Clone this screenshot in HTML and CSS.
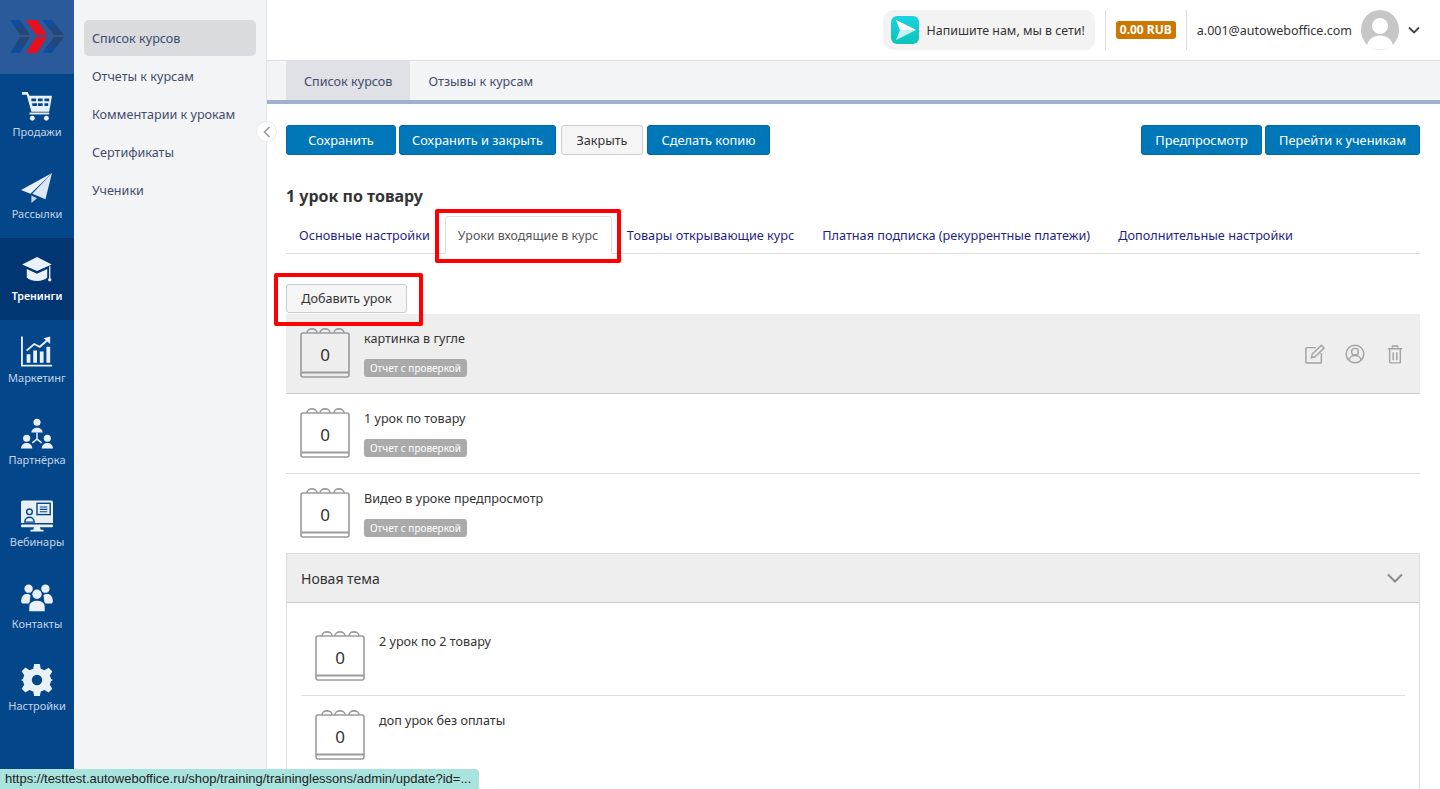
FILE: index.html
```html
<!DOCTYPE html>
<html lang="ru">
<head>
  <meta charset="UTF-8">
  <title>Список курсов</title>
  <link rel="stylesheet" href="styles.css">
</head>
<body>
  <div class="app">
    <!-- Левое меню -->
    <aside class="rail">
      <div class="logo">
        <svg width="54" height="34" viewBox="0 0 54 34">
          <defs>
            <linearGradient id="logo-top" x1="0" y1="0" x2="0" y2="1"><stop offset="0" stop-color="#0b4fa6"/><stop offset="1" stop-color="#2b4468"/></linearGradient>
            <linearGradient id="logo-bottom" x1="0" y1="0" x2="0" y2="1"><stop offset="0" stop-color="#2b4468"/><stop offset="1" stop-color="#0b4fa6"/></linearGradient>
          </defs>
          <polygon points="0,0 10,0 20,15 10,15" fill="url(#logo-top)"/>
          <polygon points="10,17 20,17 10,33 0,33" fill="url(#logo-bottom)"/>
          <polygon points="32,0 42,0 54,15 44,15" fill="url(#logo-top)"/>
          <polygon points="44,17 54,17 42,33 32,33" fill="url(#logo-bottom)"/>
          <polygon points="16,0 27,0 37,15 26,15" fill="#e8101e"/>
          <polygon points="26,17 37,17 27,33 16,33" fill="#e8101e"/>
        </svg>
      </div>
      <a class="rail-item">
        <span class="rail-icon"><svg width="32" height="30" viewBox="0 0 34 32"><path d="M1 1h6l2 4h24l-3 17H11L6 4H1z" fill="#e9f0f8"/><path d="M11 8h5v3h-5zM18 8h5v3h-5zM25 8h5v3h-5zM12 13h5v3h-5zM18 13h5v3h-5zM25 13h4v3h-4z" fill="#04468a"/><rect x="9" y="23" width="21" height="2" fill="#e9f0f8"/><circle cx="12" cy="29" r="2.6" fill="#e9f0f8"/><circle cx="27" cy="29" r="2.6" fill="#e9f0f8"/></svg></span>
        <span class="rail-label">Продажи</span>
      </a>
      <a class="rail-item">
        <span class="rail-icon"><svg width="32" height="30" viewBox="0 0 34 32"><path d="M33 0 L0 18 l10 4z" fill="#e9f0f8"/><path d="M33 0 L12 22 l14 6z" fill="#dce7f3"/><path d="M11 24v8l6-5z" fill="#c3d3e6"/></svg></span>
        <span class="rail-label">Рассылки</span>
      </a>
      <a class="rail-item active">
        <span class="rail-icon"><svg width="32" height="26" viewBox="0 0 34 28"><path d="M17 0 33 8 17 15 1 8z" fill="#e9f0f8"/><path d="M6 13v9c4 5 18 5 22 0v-9l-11 5z" fill="#e9f0f8"/><rect x="30" y="10" width="1.4" height="13" fill="#e9f0f8"/><circle cx="30.7" cy="24.5" r="1.8" fill="#e9f0f8"/></svg></span>
        <span class="rail-label">Тренинги</span>
      </a>
      <a class="rail-item">
        <span class="rail-icon"><svg width="32" height="32" viewBox="0 0 34 33"><path d="M1 0v31h32" fill="none" stroke="#e9f0f8" stroke-width="2"/><path d="M6 28V19h4v9zM13 28V15h4v13zM20 28V16h4v12zM27 28V11h4v17z" fill="#e9f0f8"/><path d="M6 15l8-7 6 3 8-7" fill="none" stroke="#e9f0f8" stroke-width="2"/><path d="M24 2l7-2v8z" fill="#e9f0f8"/></svg></span>
        <span class="rail-label">Маркетинг</span>
      </a>
      <a class="rail-item">
        <span class="rail-icon"><svg width="32" height="32" viewBox="0 0 34 33"><g fill="#e9f0f8"><circle cx="17" cy="4" r="3.8"/><path d="M11 15c0-7 12-7 12 0z"/><circle cx="6" cy="21" r="3.8"/><path d="M0 32c0-8 12-8 12 0z"/><circle cx="28" cy="21" r="3.8"/><path d="M22 32c0-8 12-8 12 0z"/></g><path d="M17 15v7l-5 4M17 22l5 4" fill="none" stroke="#e9f0f8" stroke-width="1.6"/></svg></span>
        <span class="rail-label">Партнёрка</span>
      </a>
      <a class="rail-item">
        <span class="rail-icon"><svg width="32" height="32" viewBox="0 0 34 33"><path d="M2 0h30a2 2 0 0 1 2 2v22H0V2a2 2 0 0 1 2-2z" fill="#e9f0f8"/><rect x="0" y="25.500" width="34" height="3" rx="1" fill="#e9f0f8"/><path d="M14 28h6l1 3h3v2H10v-2h3z" fill="#e9f0f8"/><rect x="17" y="3" width="14" height="12" fill="none" stroke="#04468a" stroke-width="1.500"/><path d="M20 7h8M20 9.500h8M20 12h8" stroke="#04468a" stroke-width="1.200"/><circle cx="9" cy="12" r="3" fill="none" stroke="#04468a" stroke-width="1.500"/><path d="M4 23c0-7 10-7 10 0z" fill="none" stroke="#04468a" stroke-width="1.500"/></svg></span>
        <span class="rail-label">Вебинары</span>
      </a>
      <a class="rail-item">
        <span class="rail-icon"><svg width="32" height="28" viewBox="0 0 34 30"><g fill="#e9f0f8"><circle cx="8" cy="5" r="4.500"/><path d="M0 19c0-10 8-9 10-7l-1 9H1z"/><circle cx="26" cy="5" r="4.500"/><path d="M34 19c0-10-8-9-10-7l1 9h8z"/><circle cx="17" cy="11" r="5"/></g><path d="M8 30v-6c0-9 18-9 18 0v6z" fill="#e9f0f8" stroke="#04468a" stroke-width="1.500"/></svg></span>
        <span class="rail-label">Контакты</span>
      </a>
      <a class="rail-item">
        <span class="rail-icon"><svg width="32" height="32" viewBox="0 0 34 34"><path d="M14 0h6l1 5 4 1.700 4.300-2.700 4 4-2.700 4.300L32 16l2 1v0l-2 1-1.400 4 2.700 4.300-4 4-4.300-2.700-4 1.700-1 5h-6l-1-5-4-1.700-4.300 2.700-4-4L3.400 22 2 18l-2-1 2-1 1.400-4-2.700-4.300 4-4L9 6.700l4-1.700z" fill="#e9f0f8"/><circle cx="17" cy="17" r="5.500" fill="#04468a"/></svg></span>
        <span class="rail-label">Настройки</span>
      </a>
    </aside>

    <!-- Подменю -->
    <nav class="submenu">
      <a class="submenu-item active">Список курсов</a>
      <a class="submenu-item">Отчеты к курсам</a>
      <a class="submenu-item">Комментарии к урокам</a>
      <a class="submenu-item">Сертификаты</a>
      <a class="submenu-item">Ученики</a>
      <span class="collapse">
        <svg width="8" height="12" viewBox="0 0 8 12"><path d="M6.500 1 1.500 6l5 5" fill="none" stroke="#9a9a9a" stroke-width="1.600"/></svg>
      </span>
    </nav>

    <div class="main">
      <!-- Шапка -->
      <header class="topbar">
        <div class="chat">
          <svg width="28" height="28" viewBox="0 0 28 28">
            <defs><linearGradient id="chat-bg" x1="0" y1="0" x2="0" y2="1"><stop offset="0" stop-color="#19d3e0"/><stop offset="1" stop-color="#0cc4b8"/></linearGradient></defs>
            <rect width="28" height="28" rx="6" fill="url(#chat-bg)"/><path d="M5 4l20 10L5 24l4-10z" fill="#c5f3f0"/><path d="M5 4l20 10H9z" fill="#fff"/>
          </svg>
          <span>Напишите нам, мы в сети!</span>
        </div>
        <div class="balance"><b>0.00 RUB</b></div>
        <div class="account">
          <span>a.001@autoweboffice.com</span>
          <span class="avatar">
            <svg width="38" height="40" viewBox="0 0 38 40"><ellipse cx="19" cy="20" rx="19" ry="20" fill="#c6c6c6"/><circle cx="19" cy="16" r="8" fill="#fff"/><path d="M6 36c2-14 24-14 26 0-6 5-20 5-26 0z" fill="#fff"/></svg>
          </span>
          <svg width="12" height="8" viewBox="0 0 12 8"><path d="M1 1.500 6 6.500l5-5" fill="none" stroke="#444" stroke-width="1.800"/></svg>
        </div>
      </header>

      <div class="section-tabs">
        <a class="section-tab active">Список курсов</a>
        <a class="section-tab">Отзывы к курсам</a>
      </div>

      <div class="content">
        <div class="toolbar">
          <button class="btn primary btn-save">Сохранить</button>
          <button class="btn primary btn-save-close">Сохранить и закрыть</button>
          <button class="btn btn-close">Закрыть</button>
          <button class="btn primary btn-copy">Сделать копию</button>
          <div class="toolbar-right">
            <button class="btn primary btn-preview">Предпросмотр</button>
            <button class="btn primary btn-students">Перейти к ученикам</button>
          </div>
        </div>

        <h1 class="title">1 урок по товару</h1>

        <ul class="tabs">
          <li class="tab">Основные настройки</li>
          <li class="tab active marked">Уроки входящие в курс</li>
          <li class="tab">Товары открывающие курс</li>
          <li class="tab">Платная подписка (рекуррентные платежи)</li>
          <li class="tab">Дополнительные настройки</li>
        </ul>

        <div class="add-row">
          <button class="btn add marked">Добавить урок</button>
        </div>

        <div class="lesson hover">
          <div class="cal"><svg width="50" height="50" viewBox="0 0 50 50"><use href="#cal"/></svg><span>0</span></div>
          <div class="lesson-info">
            <div class="lesson-name">картинка в гугле</div>
            <span class="badge">Отчет с проверкой</span>
          </div>
          <div class="lesson-actions">
            <svg width="20" height="20" viewBox="0 0 22 22" fill="none" stroke="#a3a3a3" stroke-width="1.600"><path d="M12 4H2a1 1 0 0 0-1 1v15a1 1 0 0 0 1 1h15a1 1 0 0 0 1-1V10"/><path d="M8 11 18 1.500l3 3L11 14l-4 1z"/></svg>
            <svg width="20" height="20" viewBox="0 0 22 22" fill="none" stroke="#a3a3a3" stroke-width="1.600"><circle cx="11" cy="11" r="9.700"/><circle cx="11" cy="8.500" r="3.700"/><path d="M4.500 18c0-7 13-7 13 0"/></svg>
            <svg width="16" height="20" viewBox="0 0 18 22" fill="none" stroke="#a3a3a3" stroke-width="1.600"><path d="M1 5h16M6 4V2h6v2M3 5.500V20a1 1 0 0 0 1 1h10a1 1 0 0 0 1-1V5.500M7 9v9M11 9v9"/></svg>
          </div>
        </div>
        <div class="lesson">
          <div class="cal"><svg width="50" height="50" viewBox="0 0 50 50"><use href="#cal"/></svg><span>0</span></div>
          <div class="lesson-info">
            <div class="lesson-name">1 урок по товару</div>
            <span class="badge">Отчет с проверкой</span>
          </div>
        </div>
        <div class="lesson">
          <div class="cal"><svg width="50" height="50" viewBox="0 0 50 50"><use href="#cal"/></svg><span>0</span></div>
          <div class="lesson-info">
            <div class="lesson-name">Видео в уроке предпросмотр</div>
            <span class="badge">Отчет с проверкой</span>
          </div>
        </div>

        <section class="topic">
          <div class="topic-head">
            <span>Новая тема</span>
            <svg width="16" height="10" viewBox="0 0 16 10"><path d="M1 1.500l7 7 7-7" fill="none" stroke="#8c8c8c" stroke-width="2"/></svg>
          </div>
          <div class="topic-body">
            <div class="topic-lesson">
              <div class="cal"><svg width="50" height="50" viewBox="0 0 50 50"><use href="#cal"/></svg><span>0</span></div>
              <div class="lesson-name">2 урок по 2 товару</div>
            </div>
            <div class="topic-lesson">
              <div class="cal"><svg width="50" height="50" viewBox="0 0 50 50"><use href="#cal"/></svg><span>0</span></div>
              <div class="lesson-name">доп урок без оплаты</div>
            </div>
          </div>
        </section>
      </div>
    </div>
  </div>

  <div class="status-link">https://testtest.autoweboffice.ru/shop/training/traininglessons/admin/update?id=...</div>

  <!-- Иконка календаря -->
  <svg class="defs" width="0" height="0">
    <defs>
      <g id="cal" fill="none" stroke="#9c9c9c" stroke-width="1.600">
        <path d="M7 5H3a2 2 0 0 0-2 2v40a2 2 0 0 0 2 2h44a2 2 0 0 0 2-2V7a2 2 0 0 0-2-2h-3"/>
        <path d="M1 44.500h48" stroke-width="2"/>
        <path d="M7 5c0-5.500 10-5.500 10 0M7 5h13"/>
        <path d="M20 5c0-5.500 10-5.500 10 0M20 5h14"/>
        <path d="M34 5c0-5.500 10-5.500 10 0M34 5h10"/>
      </g>
    </defs>
  </svg>
</body>
</html>
```

FILE: styles.css
```css
/* Общие стили */
* {
  margin: 0;
  padding: 0;
  box-sizing: border-box;
}

html, body {
  height: 100%;
  overflow: hidden;
}

body {
  background: #fff;
  color: #333;
  font-family: "Noto Sans", Arial, sans-serif;
  font-size: 12.6px;
}

.defs {
  display: block;
}

.app {
  display: flex;
  height: 789px;
  overflow: hidden;
}

/* Левое меню */
.rail {
  flex: 0 0 74px;
  background: #04468a;
}

.logo {
  display: flex;
  align-items: center;
  justify-content: center;
  height: 74px;
  background: #2b5a9a;
}

.rail-item {
  display: flex;
  flex-direction: column;
  align-items: center;
  height: 82px;
  padding-top: 15px;
  color: #c3d5ea;
  font-size: 11px;
}

.rail-icon {
  display: flex;
  align-items: center;
  height: 34px;
}

.rail-label {
  margin-top: 1px;
  line-height: 16px;
}

.rail-item.active {
  background: #023672;
  color: #fff;
  font-size: 10.6px;
  font-weight: 600;
}

/* Подменю */
.submenu {
  position: relative;
  flex: 0 0 193px;
  padding: 20px 10px 0;
  background: #f3f4f6;
  border-right: 1px solid #e2e3e6;
}

.submenu-item {
  display: block;
  height: 36px;
  margin-bottom: 2px;
  padding: 1px 8px 0;
  border-radius: 5px;
  color: #3f4c6b;
  line-height: 36px;
}

.submenu-item.active {
  background: #d9dbdf;
}

.collapse {
  position: absolute;
  top: 121px;
  right: -11px;
  display: flex;
  align-items: center;
  justify-content: center;
  width: 21px;
  height: 21px;
  background: #fff;
  border: 1px solid #e8e8e8;
  border-radius: 50%;
}

.main {
  flex: 1;
  min-width: 0;
}

/* Шапка */
.topbar {
  display: flex;
  align-items: center;
  justify-content: flex-end;
  height: 61px;
  padding: 0 20px 0 0;
  border-bottom: 1px solid #dcdde0;
}

.chat {
  display: flex;
  align-items: center;
  gap: 8px;
  height: 40px;
  padding: 0 10px 0 8px;
  background: #f3f3f4;
  border-radius: 10px;
  font-size: 12.4px;
}

.balance {
  display: flex;
  align-items: center;
  height: 40px;
  margin-left: 10px;
  padding: 0 10px;
  border-left: 1px solid #dcdcdc;
  border-right: 1px solid #dcdcdc;
}

.balance b {
  padding: 0 4px;
  background: #cc7700;
  border-radius: 3px;
  color: #fff;
  font-size: 12px;
  line-height: 18px;
}

.account {
  display: flex;
  align-items: center;
  margin-left: 10px;
  font-size: 12.5px;
}

.avatar {
  display: flex;
  margin: 0 9px;
}

/* Вкладки раздела */
.section-tabs {
  display: flex;
  height: 43px;
  padding-left: 19px;
  background: #f3f4f6;
  border-bottom: 4px solid #a0b1cc;
}

.section-tab {
  padding: 0 18px;
  color: #3f4c6b;
  line-height: 41px;
}

.section-tab.active {
  background: #dfe1e6;
}

.content {
  padding: 21px 20px 0 19px;
}

/* Кнопки */
.toolbar {
  display: flex;
  gap: 3px;
}

.toolbar-right {
  display: flex;
  gap: 3px;
  margin-left: auto;
}

.btn {
  height: 30px;
  background: #f5f5f5;
  border: 1px solid #ccc;
  border-radius: 3px;
  color: #333;
  font: inherit;
}

.btn.primary {
  background: #0077b8;
  border-color: #006aa5;
  color: #fff;
  font-size: 12.8px;
}

.btn-save { width: 110px; }
.btn-save-close { width: 157px; }
.btn-close { width: 82px; margin-left: 2px; }
.btn-copy { width: 123px; margin-left: 1px; }
.btn-preview { width: 121px; }
.btn-students { width: 155px; }

.title {
  margin-top: 30px;
  color: #333;
  font-size: 16px;
  font-weight: 700;
  line-height: 22px;
}

/* Вкладки курса */
.tabs {
  display: flex;
  height: 39px;
  margin-top: 8px;
  list-style: none;
  border-bottom: 1px solid #ddd;
}

.tab {
  margin-right: 2px;
  padding: 0 13px;
  color: #1f1f80;
  font-size: 12.7px;
  line-height: 41px;
}

.tab.active {
  position: relative;
  width: 167px;
  height: 38px;
  margin-top: 1px;
  padding: 0 12px;
  background: #fff;
  border: 1px solid #ddd;
  border-bottom-color: #fff;
  border-radius: 3px 3px 0 0;
  color: #555;
  font-size: 12.4px;
  line-height: 38px;
  white-space: nowrap;
}

/* Красные рамки на скриншоте */
.marked {
  position: relative;
}

.marked::after {
  content: "";
  position: absolute;
  border: 4px solid #f00;
  border-radius: 2px;
}

.tab.marked::after {
  top: -8px;
  right: -10px;
  bottom: -10px;
  left: -11px;
}

.btn.marked::after {
  top: -12px;
  right: -17px;
  bottom: -14px;
  left: -13px;
}

.add-row {
  padding-top: 30px;
  padding-bottom: 1px;
}

.add {
  display: block;
  width: 121px;
  height: 29px;
}

/* Уроки */
.lesson {
  display: flex;
  gap: 14px;
  height: 80px;
  padding: 14px 17px 0 14px;
  border-bottom: 1px solid #ddd;
}

.lesson.hover {
  background: #eee;
  border-bottom-color: #ccc;
}

.cal {
  display: grid;
  flex: 0 0 50px;
  width: 50px;
  height: 50px;
  place-items: center;
  font-size: 17px;
}

.cal svg, .cal span {
  grid-area: 1 / 1;
}

.cal span {
  padding-top: 3px;
}

.lesson-name {
  line-height: 22px;
}

.badge {
  display: inline-block;
  height: 18px;
  margin-top: 9px;
  padding: 0 6px;
  background: #aaa;
  border-radius: 3px;
  color: #fff;
  font-size: 10px;
  line-height: 18px;
}

.lesson-actions {
  display: flex;
  align-items: center;
  gap: 20px;
  height: 20px;
  margin: 16px 0 0 auto;
}

.lesson-actions svg:last-child {
  margin-left: 2px;
}

/* Тема */
.topic {
  border: 1px solid #ddd;
  border-top: 0;
}

.topic-head {
  display: flex;
  align-items: center;
  justify-content: space-between;
  height: 49px;
  padding: 0 16px 0 14px;
  background: #eee;
  border-bottom: 1px solid #ccc;
  font-size: 14px;
}

.topic-body {
  padding: 14px 14px 40px;
}

.topic-lesson {
  display: flex;
  gap: 14px;
  height: 79px;
  padding: 14px 14px 0;
  border-bottom: 1px solid #ddd;
}

.topic-lesson:last-child {
  border-bottom: 0;
}

/* Ссылка браузера */
.status-link {
  position: fixed;
  left: 0;
  bottom: 0;
  width: 479px;
  height: 20px;
  padding-left: 5px;
  background: #a9e3dd;
  border-radius: 0 4px 0 0;
  color: #222;
  font-family: "Liberation Sans", Arial, sans-serif;
  font-size: 13px;
  line-height: 20px;
  white-space: nowrap;
  overflow: hidden;
}
```
